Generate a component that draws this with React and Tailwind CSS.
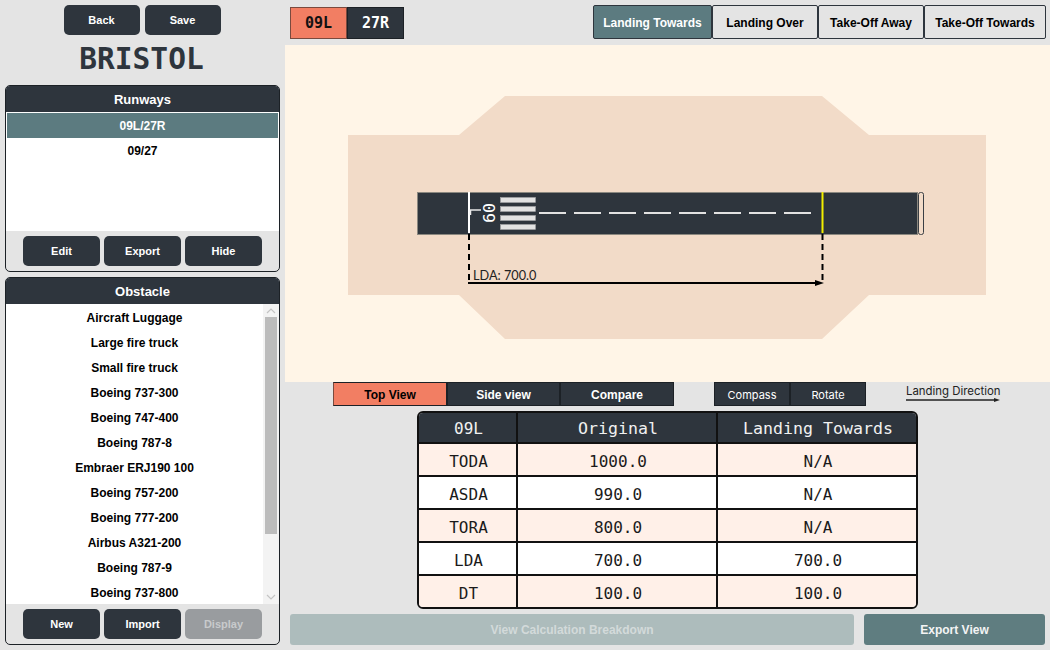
const RUNWAYS = ["09L/27R", "09/27"];
const OBSTACLES = [
  "Aircraft Luggage",
  "Large fire truck",
  "Small fire truck",
  "Boeing 737-300",
  "Boeing 747-400",
  "Boeing 787-8",
  "Embraer ERJ190 100",
  "Boeing 757-200",
  "Boeing 777-200",
  "Airbus A321-200",
  "Boeing 787-9",
  "Boeing 737-800",
];
const MODES = [
  { label: "Landing Towards", width: "w-[119px]", active: true },
  { label: "Landing Over", width: "w-[106px]" },
  { label: "Take-Off Away", width: "w-[106px]" },
  { label: "Take-Off Towards", width: "w-[122px]" },
];
const ROWS = [
  ["TODA", "1000.0", "N/A"],
  ["ASDA", "990.0", "N/A"],
  ["TORA", "800.0", "N/A"],
  ["LDA", "700.0", "700.0"],
  ["DT", "100.0", "100.0"],
];

function DarkButton({ children, disabled }) {
  return (
    <button
      className={`w-[77px] h-[30px] pt-[1px] rounded-[5px] text-[11px] font-bold ${
        disabled ? "bg-[#999c9f] text-[#c8cacc]" : "bg-[#2e353d] text-white"
      }`}
    >
      {children}
    </button>
  );
}

function Panel({ title, height, children, actions }) {
  return (
    <section className={`${height} flex flex-col border border-[#1c2126] rounded-[5px] overflow-hidden`}>
      <h2 className="h-[26px] pt-[2px] shrink-0 bg-[#2e353d] text-white text-[13px] font-bold flex items-center justify-center">
        {title}
      </h2>
      <div className="flex-1 min-h-0 bg-white flex">{children}</div>
      <div className="h-[40px] shrink-0 flex items-center justify-center gap-[4px] pb-[1px]">{actions}</div>
    </section>
  );
}

function RunwayDiagram() {
  const dashes = [539, 574, 609, 644, 679, 714, 749, 784];
  return (
    <svg viewBox="285 45 765 337" className="block w-[765px] h-[337px]">
      <rect x="285" y="45" width="765" height="337" fill="#fff5e7" />
      <polygon
        points="505,96 822,96 869,135 986,135 986,295 869,295 822,339 505,339 459,295 348,295 348,135 459,135"
        fill="#f2dbc8"
      />
      <rect x="417.5" y="192.5" width="500" height="42" fill="#2e353d" stroke="#8b8880" />
      <rect x="918.5" y="192.5" width="5" height="42" rx="2" fill="#f2dbc8" stroke="#3a3f44" />
      <line x1="469" y1="192" x2="469" y2="233" stroke="#fff" strokeWidth="2" />
      <path d="M470.5 215V210H481" fill="none" stroke="#e8e8e8" strokeWidth="1.5" />
      <text
        transform="translate(483 213) rotate(90)"
        textAnchor="middle"
        fill="#fff"
        fontFamily="'DejaVu Sans Mono', monospace"
        fontSize="16.6"
      >
        09
      </text>
      {[197, 206, 215, 224].map((y) => (
        <rect key={y} x="500.5" y={y + 0.5} width="35" height="5" fill="#e2e2e2" stroke="#a5a7a8" strokeWidth="0.6" />
      ))}
      {dashes.map((x) => (
        <rect key={x} x={x} y="212" width="27" height="2" fill="#e2e2e2" />
      ))}
      <line x1="822.5" y1="192" x2="822.5" y2="233" stroke="#f2ee00" strokeWidth="2" />
      <line x1="469" y1="234" x2="469" y2="283" stroke="#000" strokeWidth="2" strokeDasharray="6 4" />
      <line x1="822.5" y1="234" x2="822.5" y2="283" stroke="#000" strokeWidth="2" strokeDasharray="6 4" />
      <line x1="468" y1="283" x2="820" y2="283" stroke="#000" strokeWidth="2" />
      <path d="M815 280L824 283L815 286Z" fill="#000" />
      <text x="473" y="280" fill="#222" fontFamily="Lato, sans-serif" fontSize="12.7">
        LDA: 700.0
      </text>
    </svg>
  );
}

export default function App() {
  return (
    <div className="w-[1050px] h-[650px] overflow-hidden bg-[#e4e4e4] flex font-['Liberation_Sans',sans-serif]">
      {/* Left column */}
      <aside className="w-[285px] shrink-0 pl-[5px] pr-[5px] pt-[5px] flex flex-col">
        <div className="flex justify-center gap-[5px] pr-[1px]">
          <button className="w-[76px] h-[30px] rounded-[5px] bg-[#2e353d] text-white text-[11px] font-bold">Back</button>
          <button className="w-[76px] h-[30px] rounded-[5px] bg-[#2e353d] text-white text-[11px] font-bold">Save</button>
        </div>
        <h1 className="h-[50px] pr-[2px] flex items-center justify-center text-[#2e353d] text-[29.5px] leading-none font-['DejaVu_Sans_Mono',monospace] font-bold">
          BRISTOL
        </h1>
        <Panel
          title="Runways"
          height="h-[187px]"
          actions={
            <>
              <DarkButton>Edit</DarkButton>
              <DarkButton>Export</DarkButton>
              <DarkButton>Hide</DarkButton>
            </>
          }
        >
          <ul className="flex-1 pt-[1px] px-[1px] text-[12px] font-bold">
            {RUNWAYS.map((r, i) => (
              <li
                key={r}
                className={`h-[25px] flex items-center justify-center ${i === 0 ? "bg-[#5c7b80] text-white" : "text-black"}`}
              >
                {r}
              </li>
            ))}
          </ul>
        </Panel>
        <div className="h-[5px] shrink-0" />
        <Panel
          title="Obstacle"
          height="h-[368px]"
          actions={
            <>
              <DarkButton>New</DarkButton>
              <DarkButton>Import</DarkButton>
              <DarkButton disabled>Display</DarkButton>
            </>
          }
        >
          <ul className="flex-1 pt-[1px] text-[12px] font-bold text-black overflow-hidden">
            {OBSTACLES.map((o) => (
              <li key={o} className="h-[25px] flex items-center justify-center">
                {o}
              </li>
            ))}
          </ul>
          <div className="w-[16px] shrink-0 bg-[#f3f3f3] flex flex-col items-center">
            <svg viewBox="0 0 10 6" className="w-[10px] h-[6px] mt-[4px] mb-[3px]">
              <path d="M1 5L5 1L9 5" fill="none" stroke="#c4c4c4" strokeWidth="1.2" />
            </svg>
            <div className="w-[12px] h-[217px] bg-[#bcbcbc]" />
            <div className="flex-1" />
            <svg viewBox="0 0 10 6" className="w-[10px] h-[6px] mb-[4px]">
              <path d="M1 1L5 5L9 1" fill="none" stroke="#c4c4c4" strokeWidth="1.2" />
            </svg>
          </div>
        </Panel>
      </aside>

      {/* Main column */}
      <main className="flex-1 min-w-0 flex flex-col">
        <div className="h-[45px] shrink-0 flex justify-between pl-[5px] pr-[4px] pt-[5px]">
          <div className="flex pt-[2px] h-[34px] font-['DejaVu_Sans_Mono',monospace] text-[15px] font-bold">
            <button className="w-[57px] bg-[#f27e63] text-[#111] border border-[#7a4a3e]">09L</button>
            <button className="w-[57px] bg-[#2e353d] text-white border border-[#1c2126]">27R</button>
          </div>
          <div className="flex h-[34px] text-[12px] font-bold">
            {MODES.map((m) => (
              <button
                key={m.label}
                className={`${m.width} pt-[2px] border border-[#2e353d] rounded-[2px] ${
                  m.active ? "bg-[#5c7b80] text-white" : "bg-[#e4e4e4] text-black"
                }`}
              >
                {m.label}
              </button>
            ))}
          </div>
        </div>

        <RunwayDiagram />

        <div className="h-[24px] shrink-0 flex text-[12px]">
          <div className="ml-[48px] flex font-bold">
            <button className="w-[114px] pt-[2px] bg-[#f27e63] text-black border border-[#1c2126] border-l-[#7a4a3e]">Top View</button>
            <button className="w-[113px] pt-[2px] bg-[#2e353d] text-white border border-[#1c2126]">Side view</button>
            <button className="w-[114px] pt-[2px] bg-[#2e353d] text-white border border-[#1c2126]">Compare</button>
          </div>
          <div className="ml-[40px] flex font-['Inter',sans-serif] text-[11px] font-normal">
            <button className="w-[76px] pt-[2px] bg-[#2e353d] text-white border border-[#1c2126]">Compass</button>
            <button className="w-[76px] pt-[2px] bg-[#2e353d] text-white border border-[#1c2126]">Rotate</button>
          </div>
          <div className="ml-[40px] w-[96px] pt-[3px] flex flex-col text-[11.4px] text-[#222] font-['Inter',sans-serif]">
            <span className="whitespace-nowrap leading-[12px]">Landing Direction</span>
            <svg viewBox="0 0 96 6" className="w-[96px] h-[6px]">
              <path d="M0 3H91" stroke="#222" strokeWidth="1.3" />
              <path d="M88 1L94 3L88 5Z" fill="#222" />
            </svg>
          </div>
        </div>

        <div className="pt-[5px] pl-[132px]">
          <table className="w-[501px] h-[198px] table-fixed border-separate border-spacing-0 border-2 border-[#111] rounded-[6px] overflow-hidden font-['DejaVu_Sans_Mono',monospace] text-[16px] text-[#1a1a1a]">
            <thead>
              <tr className="bg-[#2e353d] text-[#f1f1f1] text-[16.6px]">
                <th className="w-[99px] h-[31px] pt-[3px] pl-[2px] font-normal text-[16px] border-r-2 border-[#111] border-b-2">09L</th>
                <th className="w-[200px] h-[31px] pt-[3px] pl-[2px] font-normal border-r-2 border-[#111] border-b-2">Original</th>
                <th className="h-[31px] pt-[3px] pl-[2px] font-normal border-b-2 border-[#111]">Landing Towards</th>
              </tr>
            </thead>
            <tbody>
              {ROWS.map((row, i) => (
                <tr key={row[0]} className={i % 2 === 0 ? "bg-[#fff0e8]" : "bg-white"}>
                  {row.map((cell, j) => (
                    <td
                      key={j}
                      className={`text-center pt-[5px] pl-[2px] ${j < 2 ? "border-r-2 border-[#111]" : ""} ${
                        i < ROWS.length - 1 ? "h-[33px] border-b-2 border-[#111]" : "h-[31px]"
                      }`}
                    >
                      {cell}
                    </td>
                  ))}
                </tr>
              ))}
            </tbody>
          </table>
        </div>

        <div className="pt-[5px] pl-[5px] pr-[5px] flex gap-[10px]">
          <button className="w-[564px] h-[31px] rounded-[3px] bg-[#adbcbc] text-[#d3dada] text-[12px] font-bold">
            View Calculation Breakdown
          </button>
          <button className="w-[181px] h-[31px] rounded-[3px] bg-[#5f7d80] text-[#f4f4f4] text-[12px] font-bold">
            Export View
          </button>
        </div>
      </main>
    </div>
  );
}
